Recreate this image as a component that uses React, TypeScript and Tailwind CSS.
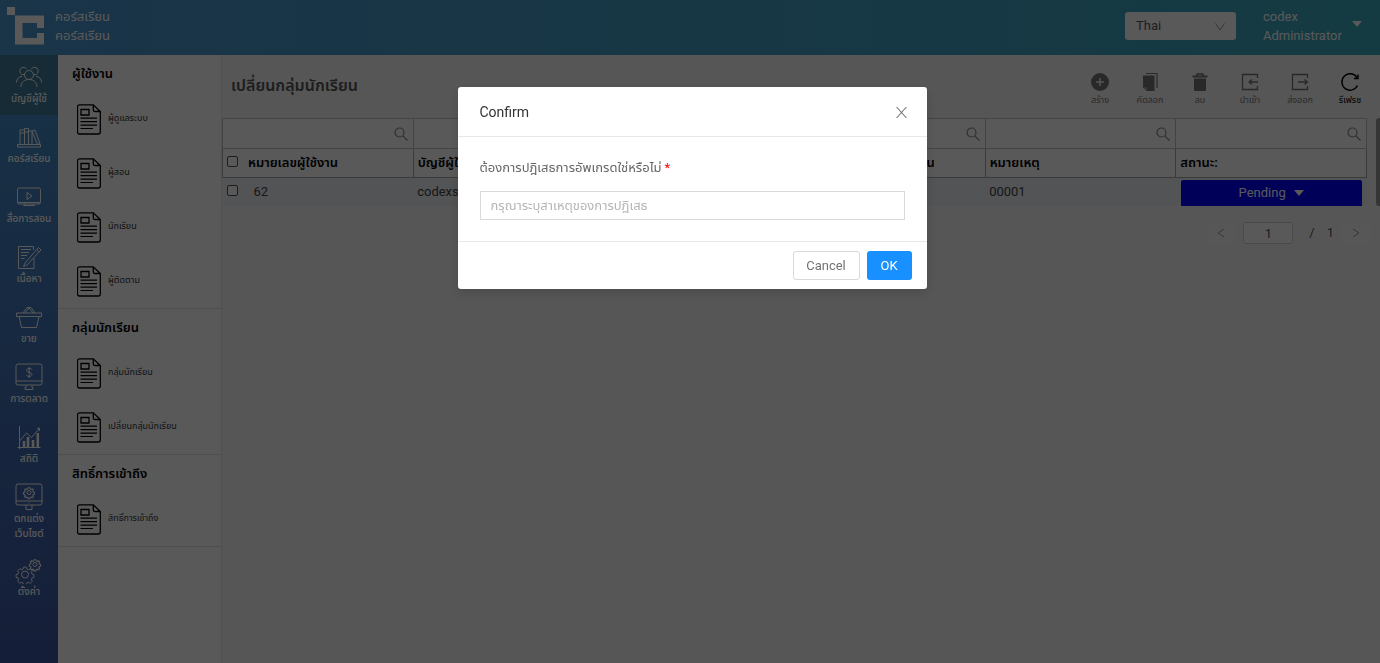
import { useState } from "react";
import type { ReactNode } from "react";

const NAV = [
  { icon: "users", label: "บัญชีผู้ใช้", active: true },
  { icon: "books", label: "คอร์สเรียน" },
  { icon: "media", label: "สื่อการสอน" },
  { icon: "content", label: "เนื้อหา" },
  { icon: "basket", label: "ขาย" },
  { icon: "market", label: "การตลาด" },
  { icon: "stats", label: "สถิติ" },
  { icon: "site", label: "ตกแต่ง เว็บไซต์" },
  { icon: "gears", label: "ตั้งค่า" },
];

const SECTIONS = [
  { title: "ผู้ใช้งาน", items: ["ผู้ดูแลระบบ", "ผู้สอน", "นักเรียน", "ผู้ติดตาม"] },
  { title: "กลุ่มนักเรียน", items: ["กลุ่มนักเรียน", "เปลี่ยนกลุ่มนักเรียน"] },
  { title: "สิทธิ์การเข้าถึง", items: ["สิทธิ์การเข้าถึง"] },
];

const COLUMNS = [
  { key: "id", title: "หมายเลขผู้ใช้งาน" },
  { key: "account", title: "บัญชีผู้ใช้" },
  { key: "from", title: "" },
  { key: "to", title: "เปลี่ยนไปเป็นกลุ่มนักเรียน" },
  { key: "note", title: "หมายเหตุ" },
  { key: "status", title: "สถานะ:" },
];

const gear =
  "M-1.5-7h3l.5 2 1.6.7 1.8-1.1 2.1 2.1-1.1 1.8.7 1.5 2 .5v3l-2 .5-.7 1.6 1.1 1.8-2.1 2.1-1.8-1.1-1.6.7-.5 2h-3l-.5-2-1.6-.7-1.8 1.1-2.1-2.1 1.1-1.8-.7-1.6-2-.5v-3l2-.5.7-1.5-1.1-1.8 2.1-2.1 1.8 1.1 1.6-.7z";

const NAV_ICONS: Record<string, ReactNode> = {
  users: (
    <>
      <circle cx="14" cy="12" r="4.5" />
      <path d="M6 24c0-4.500 3-7.500 8-7.500s8 3 8 7.500M9.500 11.500a3.700 3.700 0 1 1 2.300-5.200M1.500 19.500c0-3.800 2.500-6 5.500-6.200M18.500 11.500a3.700 3.700 0 1 0-2.300-5.200M26.500 19.500c0-3.800-2.500-6-5.500-6.200" />
    </>
  ),
  books: (
    <path d="M2.500 21.500h23V24h-23zM5 21.500V7h4.500v14.500M9.500 21.500V5.500h4v16M13.500 21.500V8H17v13.500M17 8l3-1L25 20.500l-2.500 1zM5 10h4.500M9.500 9h4" />
  ),
  media: (
    <path d="M4 5h20a1.500 1.500 0 0 1 1.500 1.500v13A1.500 1.500 0 0 1 24 21H4a1.500 1.500 0 0 1-1.500-1.500v-13A1.500 1.500 0 0 1 4 5zM12 9.500v7l5-3.500zM10 21l-1.500 1.500h11L18 21M3 19.500h22" />
  ),
  content: (
    <path d="M18.500 7V3.500H3.500v22H19V15M6 6.500h10M6 9.500h8M6 12.500h6M6 15.500h3.500M10 20l-1.500 3.500L12 22 26 7l-2.500-2.500zM21.500 6.500L24 9" />
  ),
  basket: (
    <path d="M1.500 10h25v3.500h-25zM4 13.500l2.500 11h15l2.500-11M8 10l4-5.500h4L20 10M10 10l4-5 4 5" />
  ),
  market: (
    <>
      <path d="M3 1h22a2 2 0 0 1 2 2v17a2 2 0 0 1-2 2H3a2 2 0 0 1-2-2V3a2 2 0 0 1 2-2zM1 18h26M11 22v2.500h-1v2h8v-2h-1V22" />
      <path d="M17 6.500c-.5-1.300-5.500-1.700-5.500.8 0 2.700 5.500 1.500 5.500 4.200 0 2.500-5 2.300-5.800.6M14.200 4v11" />
    </>
  ),
  stats: (
    <>
      <path d="M4.500 3v23M2.500 24.500h23M4.500 18l7-8 5 4.500L24 6M22 5.500l2.500-.5V8" />
      <path d="M9 24.500V18M13 24.500V14M18 24.500V17M22.800 24.500V10" strokeWidth="2.500" />
    </>
  ),
  site: (
    <>
      <path d="M3 1h22a2 2 0 0 1 2 2v17a2 2 0 0 1-2 2H3a2 2 0 0 1-2-2V3a2 2 0 0 1 2-2zM1 18h26M11 22v4.500h6V22M13.500 20h1" />
      <path d={gear} transform="translate(14 9) scale(.6)" strokeWidth="1.7" />
      <circle cx="14" cy="9.500" r="2" />
    </>
  ),
  gears: (
    <>
      <path d={gear} transform="translate(10 18) scale(.98)" />
      <circle cx="10" cy="18.500" r="3.500" />
      <path d={gear} transform="translate(20 8) scale(.62)" strokeWidth="1.7" />
      <circle cx="20" cy="8.500" r="2" />
    </>
  ),
};

function NavIcon({ name }: { name: string }) {
  return (
    <svg viewBox="0 0 28 28" className="h-7 w-7 shrink-0" fill="none" stroke="currentColor" strokeWidth="1">
      {NAV_ICONS[name]}
    </svg>
  );
}

function DocIcon() {
  return (
    <svg viewBox="0 0 24 31" className="h-[31px] w-6 shrink-0" fill="none" stroke="#000">
      <path strokeWidth="1.3" d="M2.500 .8h13.800L23.300 7.500V28a2 2 0 0 1-2 2H2.500a2 2 0 0 1-2-2V2.800a2 2 0 0 1 2-2zM16.300 .8V6a1.500 1.500 0 0 0 1.500 1.500h5.500M4 5.500h8V11H4z" />
      <path strokeWidth="1.2" d="M3.500 14.200h16.500M3.500 17.700h16.500M3.500 21.200h16.500M3.500 24.500H16" />
    </svg>
  );
}

function SearchIcon() {
  return (
    <svg viewBox="0 0 14 14" className="h-3.5 w-3.5" fill="none" stroke="#888" strokeWidth="1.2">
      <circle cx="5.500" cy="5.500" r="4.500" />
      <path d="M8.800 8.800l4.700 4.700" />
    </svg>
  );
}

function Caret({ className }: { className?: string }) {
  return (
    <svg viewBox="0 0 10 6" className={`h-1.5 w-2.5 ${className ?? ""}`} fill="currentColor">
      <path d="M0 0h10L5 6z" />
    </svg>
  );
}

const TOOLS: { label: string; enabled?: boolean; icon: ReactNode }[] = [
  {
    label: "สร้าง",
    icon: (
      <>
        <circle cx="10" cy="10" r="9" fill="currentColor" stroke="none" />
        <path d="M10 6v8M6 10h8" stroke="#f5f5f7" />
      </>
    ),
  },
  {
    label: "คัดลอก",
    icon: (
      <>
        <path d="M3 3.500h11.500V19H7l-4-4z" fill="currentColor" stroke="none" />
        <path d="M3.500 15H7v3.500z" fill="#f5f5f7" stroke="currentColor" strokeWidth="1" />
        <path d="M6 1.500h11V16" strokeWidth="1.200" />
      </>
    ),
  },
  {
    label: "ลบ",
    icon: (
      <>
        <path d="M4 6.500h12V18a1 1 0 0 1-1 1H5a1 1 0 0 1-1-1zM2.500 3.500h15v2h-15z" fill="currentColor" stroke="none" />
        <path d="M7 4V2h6v2" />
      </>
    ),
  },
  { label: "นำเข้า", icon: <path d="M17.500 6V2.500h-15v15h15V14M18 10H9M12 7.500L9 10l3 2.500" strokeWidth="1.300" /> },
  { label: "ส่งออก", icon: <path d="M17.500 6V2.500h-15v15h15V14M8 10h9.500M14.500 7.500l3 2.500-3 2.500" strokeWidth="1.300" /> },
  {
    label: "รีเฟรช",
    enabled: true,
    icon: <path d="M17 5.500A8.200 8.200 0 1 0 17.500 13.500M18 2.500v4h-4" strokeWidth="1.400" />,
  },
];

function Header() {
  return (
    <header className="flex h-[55px] shrink-0 items-center bg-linear-to-r from-[#4a94ce] to-[#3ba7bd] pb-1 text-white">
      <svg viewBox="0 0 38 38" className="ml-[7px] h-[38px] w-[38px]" fill="currentColor">
        <path d="M0 0h8v8H0zM8 8.500h29V21h-7v-5H15.500v15H30v-5h7v11.500H8z" />
      </svg>
      <div className="ml-[10px] text-[13px] leading-[19px]">
        <p>คอร์สเรียน</p>
        <p>คอร์สเรียน</p>
      </div>
      <div className="relative ml-auto">
        <select
          aria-label="Language"
          className="block h-7 w-[111px] appearance-none rounded-[3px] bg-white px-[11px] text-[13px] text-[#595959]"
        >
          <option>Thai</option>
          <option>English</option>
        </select>
        <svg viewBox="0 0 10 8" className="pointer-events-none absolute top-[11px] right-[11px] h-2 w-2.5" fill="none" stroke="#999">
          <path d="M.5.5L5 7 9.500 .5" />
        </svg>
      </div>
      <button className="mr-[18px] ml-[27px] flex items-center text-left text-[13px] leading-[19px]">
        <span className="w-[89px]">
          codex
          <br />
          Administrator
        </span>
        <Caret className="-mt-1" />
      </button>
    </header>
  );
}

function DataTable() {
  return (
    <table className="w-full table-fixed border-collapse text-left">
      <thead>
        <tr className="h-[30px] bg-white">
          {COLUMNS.map((col) => (
            <td key={col.key} className="border border-[#c4c4c4] p-0">
              <label className="flex items-center pr-[5px]">
                <input aria-label={`ค้นหา ${col.title}`} className="h-7 min-w-0 flex-1 px-2 text-[13px] outline-none" />
                <SearchIcon />
              </label>
            </td>
          ))}
        </tr>
        <tr className="h-[29px] bg-white">
          {COLUMNS.map((col, i) => (
            <th key={col.key} className="border border-[#a8a8a8] px-1 py-0 text-[13px] leading-5 font-semibold whitespace-nowrap text-black">
              {i === 0 && (
                <input type="checkbox" aria-label="เลือกทั้งหมด" className="mr-2.5 h-[11px] w-[11px] appearance-none rounded-[2px] border border-[#555] bg-white" />
              )}
              {col.title}
            </th>
          ))}
        </tr>
      </thead>
      <tbody>
        <tr className="h-7 bg-[#edeff3] text-[13px] text-[#444]">
          <td className="py-0 pl-1">
            <input type="checkbox" aria-label="เลือก 62" className="mr-4 h-[11px] w-[11px] appearance-none rounded-[2px] border border-[#555] bg-white" />
            62
          </td>
          <td className="py-0 pl-1">codexs</td>
          <td />
          <td />
          <td className="py-0 pl-1">00001</td>
          <td className="px-[5px] py-0 align-bottom">
            <button className="flex h-[26px] w-full items-center justify-center gap-2 rounded-t-[2px] bg-[#0000ff] text-white">
              Pending <Caret />
            </button>
          </td>
        </tr>
      </tbody>
    </table>
  );
}

function ConfirmDialog({ onClose }: { onClose: () => void }) {
  return (
    <div className="fixed inset-0 z-10 bg-black/65 pt-[87px] pr-4 pl-5">
      <div
        role="dialog"
        aria-modal="true"
        aria-labelledby="confirm-title"
        className="mx-auto max-w-[469px] rounded-[3px] bg-white shadow-[0_4px_12px_rgba(0,0,0,0.15)]"
      >
        <div className="flex h-[50px] items-center justify-between border-b border-[#e8e8e8] pr-5 pl-[22px]">
          <h2 id="confirm-title" className="text-sm text-[#333]">
            Confirm
          </h2>
          <button aria-label="Close" onClick={onClose} className="mt-0.5 text-[#7a7a7a]">
            <svg viewBox="0 0 10 10" className="h-[11px] w-[11px]" fill="none" stroke="currentColor">
              <path d="M.5 0l9 10M9.500 0l-9 10" />
            </svg>
          </button>
        </div>
        <div className="px-[22px] py-[21px]">
          <label htmlFor="reason" className="flex gap-[3px] text-[13px] leading-5 text-[#666]">
            ต้องการปฎิเสธการอัพเกรดใช่หรือไม่
            <span className="text-[#f00]">*</span>
          </label>
          <input
            id="reason"
            placeholder="กรุณาระบุสาเหตุของการปฏิเสธ"
            className="mt-[13px] block h-[29px] w-full border border-[#d9d9d9] px-[10px] text-[13px] outline-none placeholder:text-[#b5b5b5]"
          />
        </div>
        <div className="flex justify-end gap-[7px] border-t border-[#e8e8e8] px-[15px] py-[9px]">
          <button onClick={onClose} className="h-[29px] w-[67px] rounded-[3px] border border-[#d9d9d9] text-[13px] text-[#737373]">
            Cancel
          </button>
          <button className="h-[29px] w-[45px] rounded-[3px] bg-[#1890ff] text-[13px] text-white">OK</button>
        </div>
      </div>
    </div>
  );
}

export default function App() {
  const [open, setOpen] = useState(true);

  return (
    <div className="flex h-screen flex-col overflow-hidden bg-[#f5f5f7] font-[Roboto,'Noto_Sans_Thai',sans-serif]">
      <Header />
      <div className="flex min-h-0 flex-1">
        <nav className="w-[58px] shrink-0 bg-linear-to-b from-[#4590cb] to-[#3d56a0] text-white">
          {NAV.map((item) => (
            <a
              key={item.icon}
              href="#"
              className={`flex min-h-[60px] flex-col items-center pt-2 pb-[7px] text-center text-[10px] leading-[15px] font-medium ${
                item.active ? "bg-[#3f7b98]" : ""
              }`}
            >
              <NavIcon name={item.icon} />
              <span className="w-[52px]">{item.label}</span>
            </a>
          ))}
        </nav>
        <aside className="w-[164px] shrink-0 border-r border-[#e8e8e8] bg-white">
          {SECTIONS.map((section) => (
            <section key={section.title} className="border-b border-[#e0e0e0]">
              <h3 className="flex h-[37px] items-center pl-[14px] text-[13px] font-semibold text-black">{section.title}</h3>
              {section.items.map((item) => (
                <a key={item} href="#" className="flex h-[54px] items-center gap-[7px] pl-[19px] text-[9px] text-[#333]">
                  <DocIcon />
                  {item}
                </a>
              ))}
            </section>
          ))}
        </aside>
        <main className="min-w-0 flex-1">
          <div className="flex h-[63px] items-center pr-[5px] pl-[9px]">
            <h1 className="pb-0.5 text-base font-semibold text-[#555]">เปลี่ยนกลุ่มนักเรียน</h1>
            <div className="mt-1.5 ml-auto flex">
              {TOOLS.map((tool) => (
                <button
                  key={tool.label}
                  disabled={!tool.enabled}
                  className={`flex w-[50px] flex-col items-center text-[9px] leading-4 ${tool.enabled ? "text-black" : "text-[#777]"}`}
                >
                  <svg viewBox="0 0 20 20" className="h-5 w-5" fill="none" stroke="currentColor" strokeWidth="1.500">
                    {tool.icon}
                  </svg>
                  {tool.label}
                </button>
              ))}
            </div>
          </div>
          <div className="flex justify-between">
            <div className="mr-[9px] min-w-0 flex-1">
              <DataTable />
            </div>
            <div className="h-[88px] w-1 rounded-l-[3px] bg-[#999]" />
          </div>
          <div className="mt-4 flex items-center justify-end gap-2 pr-[10px] text-[13px] text-[#555]">
            <button aria-label="Previous" className="flex h-[22px] w-7 items-center justify-center rounded-[2px] bg-[#fafafa] text-[#999]">
              <svg viewBox="0 0 8 10" className="h-2.5 w-2" fill="none" stroke="currentColor">
                <path d="M7 1L1 5l6 4" />
              </svg>
            </button>
            <input aria-label="Page" defaultValue="1" className="h-[22px] w-[50px] rounded-[3px] border border-[#d0d0d0] bg-white text-center" />
            <span className="ml-2">/</span>
            <span className="ml-1">1</span>
            <button aria-label="Next" className="flex h-[22px] w-7 items-center justify-center rounded-[2px] bg-[#fafafa] text-[#999]">
              <svg viewBox="0 0 8 10" className="h-2.5 w-2" fill="none" stroke="currentColor">
                <path d="M1 1l6 4-6 4" />
              </svg>
            </button>
          </div>
        </main>
      </div>
      {open && <ConfirmDialog onClose={() => setOpen(false)} />}
    </div>
  );
}
